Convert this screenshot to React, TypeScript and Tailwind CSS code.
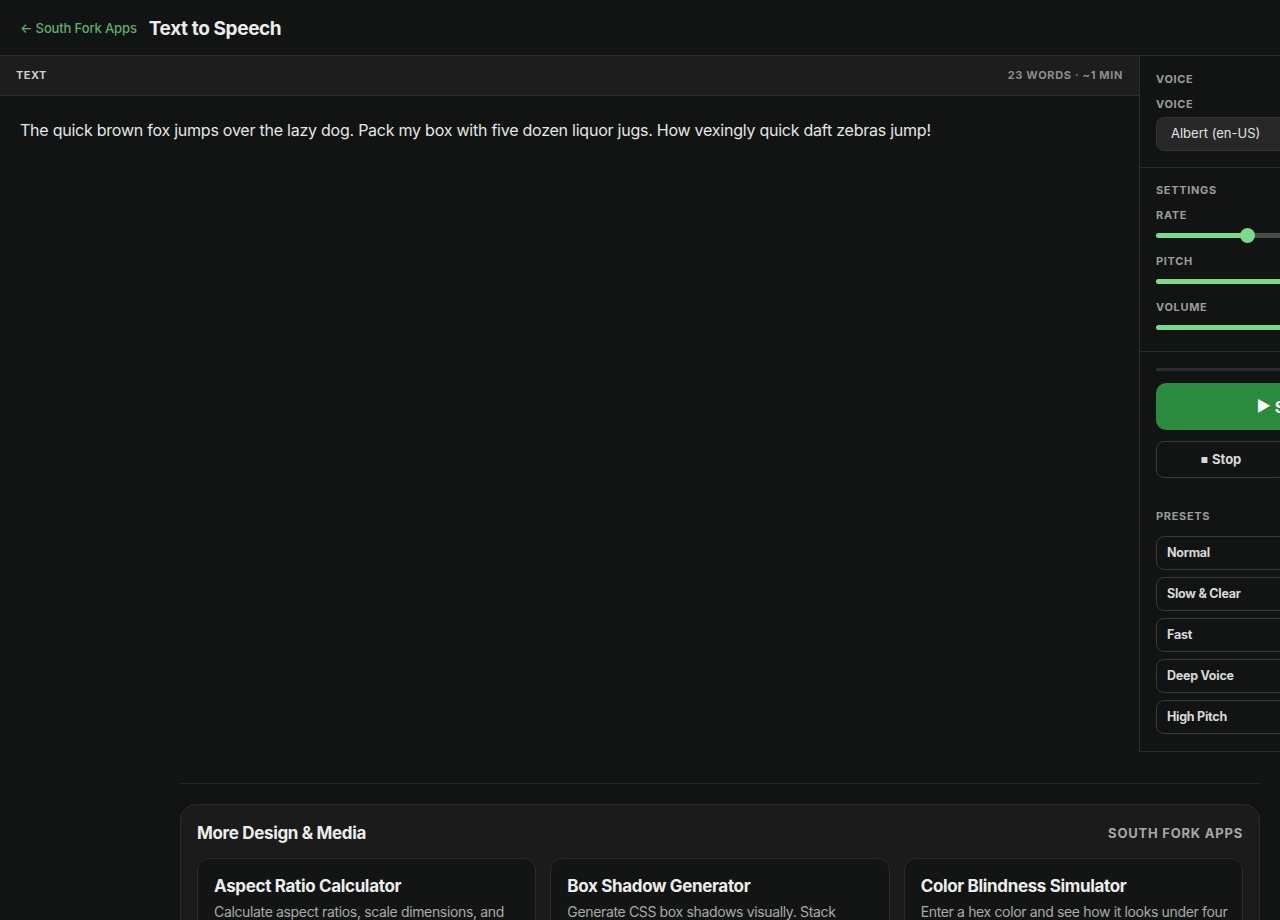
import React from 'react';

const presets = ['Normal', 'Slow & Clear', 'Fast', 'Deep Voice', 'High Pitch'];

const related = [
  {
    title: 'Aspect Ratio Calculator',
    desc: 'Calculate aspect ratios, scale dimensions, and find common screen and video sizes.',
  },
  {
    title: 'Box Shadow Generator',
    desc: 'Generate CSS box shadows visually. Stack multiple layers and copy the code.',
  },
  {
    title: 'Color Blindness Simulator',
    desc: 'Enter a hex color and see how it looks under four types of color vision deficiency.',
  },
];

function Slider({ label, value, min, max, unit }: { label: string; value: number; min: number; max: number; unit: string }) {
  const pct = ((value - min) / (max - min)) * 100;
  return (
    <div className="flex flex-col gap-[6px]">
      <div className="flex items-center justify-between">
        <span className="text-[11px] leading-[14px] font-bold uppercase tracking-[0.06em] text-[#9b9c9b]">{label}</span>
        <span className="text-[11px] leading-[14px] font-semibold text-[#9b9c9b]">
          {value.toFixed(1)}
          {unit}
        </span>
      </div>
      <div className="relative h-[14px] flex items-center">
        <div className="absolute left-0 right-0 h-[5px] rounded-full bg-[#4a4b4a]" />
        <div
          className="absolute left-0 h-[5px] rounded-full bg-[#7cd98a]"
          style={{ width: `calc(7px + (100% - 14px) * ${pct / 100})` }}
        />
        <div
          className="absolute w-[15px] h-[15px] rounded-full bg-[#7cd98a]"
          style={{ left: `calc((100% - 15px) * ${pct / 100})` }}
        />
      </div>
    </div>
  );
}

export default function App() {
  return (
    <div className="w-[1440px] min-h-screen bg-[#121413] text-[#e8e8e8] font-['Inter',sans-serif]">
      {/* Top bar */}
      <header className="h-[56px] flex items-center gap-3 px-5 pt-[3px] border-b border-[#2d2e2d]">
        <a className="text-[13px] font-medium text-[#5fae6c] tracking-[-0.01em]">← South Fork Apps</a>
        <h1 className="text-[19px] font-bold text-[#ececec] tracking-[-0.02em]">Text to Speech</h1>
      </header>

      <main className="grid grid-cols-[1139px_301px] h-[694px]">
        {/* Editor */}
        <section className="flex flex-col min-w-0">
          <div className="h-10 flex items-center justify-between px-4 bg-[#1c1d1c] border-b border-[#2d2e2d]">
            <span className="text-[11px] font-bold tracking-[0.04em] text-[#cfcfcf]">TEXT</span>
            <span className="text-[11px] font-bold tracking-[0.06em] text-[#8d8e8d]">23 WORDS · ~1 MIN</span>
          </div>
          <div className="flex-1 px-5 pt-[22px] text-[16px] leading-[1.6] text-[#e6e6e6] tracking-[-0.015em]">
            The quick brown fox jumps over the lazy dog. Pack my box with five dozen liquor jugs. How vexingly quick
            daft zebras jump!
          </div>
        </section>

        {/* Controls */}
        <aside className="flex flex-col border-l border-b border-[#2d2e2d]">
          <div className="px-4 pt-[16px] pb-4 border-b border-[#2d2e2d]">
            <h2 className="text-[11px] leading-[14px] font-bold tracking-[0.06em] text-[#9b9c9b]">VOICE</h2>
            <label className="block mt-[11px] text-[11px] leading-[14px] font-bold tracking-[0.06em] text-[#9b9c9b]">
              VOICE
            </label>
            <div className="mt-[6px] h-[34px] flex items-center justify-between px-[14px] rounded-lg bg-[#262726] border border-[#333433] text-[13px] text-[#e4e4e4]">
              <span>Albert (en-US)</span>
              <span className="text-[#9b9c9b] text-[10px]">▼</span>
            </div>
          </div>

          <div className="px-4 pt-[15px] pb-[17px] border-b border-[#2d2e2d] flex flex-col gap-[11px]">
            <h2 className="text-[11px] leading-[14px] font-bold tracking-[0.06em] text-[#9b9c9b]">SETTINGS</h2>
            <div className="flex flex-col gap-[12px]">
              <Slider label="Rate" value={1} min={0.5} max={2} unit="x" />
              <Slider label="Pitch" value={1} min={0} max={2} unit="" />
              <Slider label="Volume" value={1} min={0} max={1} unit="" />
            </div>
          </div>

          <div className="px-4 pt-4 flex flex-col">
            <div className="h-[3px] rounded-full bg-[#2c2d2f]" />
            <button className="mt-[12px] h-[47px] rounded-[10px] bg-[#2a8a3e] text-white text-[16px] font-bold flex items-center justify-center gap-1">
              <span className="text-[15px]">▶</span> Speak
            </button>
            <div className="mt-[11px] grid grid-cols-2 gap-2">
              <button className="h-[37px] rounded-lg border border-[#3a3b3a] text-[13px] font-bold text-[#d8d8d8] flex items-center justify-center gap-1">
                <span className="text-[8px]">■</span>Stop
              </button>
              <button className="h-[37px] rounded-lg border border-[#3a3b3a] text-[13px] font-bold text-[#d8d8d8] flex items-center justify-center gap-1">
                <span className="text-[9px]">❚❚</span>Pause
              </button>
            </div>
          </div>

          <div className="px-4 pt-[31px] pb-[17px] flex flex-col">
            <h2 className="text-[11px] leading-[14px] font-bold tracking-[0.06em] text-[#9b9c9b]">PRESETS</h2>
            <div className="mt-[13px] flex flex-col gap-[7px]">
              {presets.map((p) => (
                <button
                  key={p}
                  className="h-[34px] rounded-lg border border-[#3a3b3a] px-[10px] text-left text-[12.5px] font-bold text-[#d8d8d8] tracking-[-0.02em]"
                >
                  {p}
                </button>
              ))}
            </div>
          </div>
        </aside>
      </main>

      {/* Related tools */}
      <footer className="w-[1080px] mx-auto mt-[33px] border-t border-[#1f2c22] pt-5 pb-10">
        <div className="rounded-2xl border border-[#2a2b2a] bg-[#1a1b1a] p-4">
          <div className="flex items-center justify-between">
            <h3 className="text-[17px] font-bold text-[#ededed] tracking-[-0.02em]">More Design &amp; Media</h3>
            <span className="text-[13px] font-bold tracking-[0.06em] text-[#a8a8a8]">SOUTH FORK APPS</span>
          </div>
          <div className="mt-[11px] grid grid-cols-3 gap-[14px]">
            {related.map((r) => (
              <div key={r.title} className="rounded-xl border border-[#2a2b2a] bg-[#131514] pl-4 pr-[10px] pt-[15px] pb-4">
                <div className="text-[17px] font-bold text-[#ededed] tracking-[-0.02em]">{r.title}</div>
                <p className="mt-[3px] text-[14px] leading-[20px] text-[#a9a9a9] tracking-[-0.025em]">{r.desc}</p>
              </div>
            ))}
          </div>
        </div>
      </footer>
    </div>
  );
}
